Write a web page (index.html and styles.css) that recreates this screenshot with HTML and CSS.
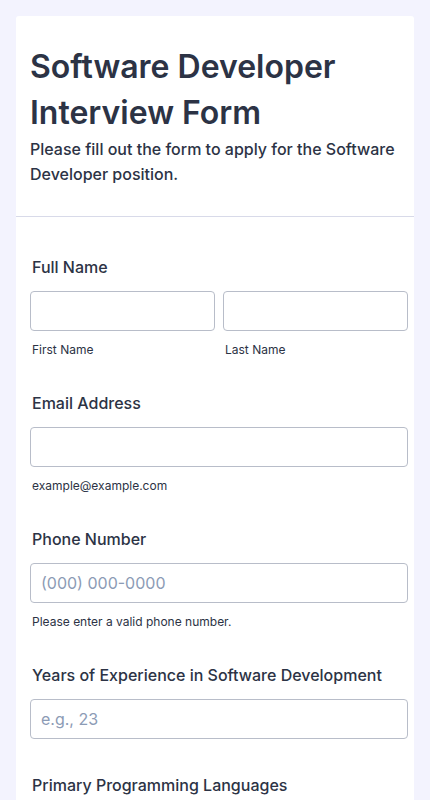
FILE: index.html
```html
<!DOCTYPE html>
<html lang="en">
<head>
    <meta charset="UTF-8">
    <meta name="viewport" content="width=device-width, initial-scale=1.0">
    <title>Software Developer Interview Form</title>
    <link rel="stylesheet" href="styles.css">
</head>
<body>
    <form class="form-card">
        <div class="form-header">
            <h1>Software Developer Interview Form</h1>
            <p>Please fill out the form to apply for the Software Developer position.</p>
        </div>

        <div class="form-list">
            <div class="field">
                <label class="field-label">Full Name</label>
                <div class="name-row">
                    <div class="name-col">
                        <input type="text" id="firstName">
                        <span class="sublabel">First Name</span>
                    </div>
                    <div class="name-col">
                        <input type="text" id="lastName">
                        <span class="sublabel">Last Name</span>
                    </div>
                </div>
            </div>

            <div class="field">
                <label class="field-label" for="email">Email Address</label>
                <input type="email" id="email">
                <span class="sublabel">example@example.com</span>
            </div>

            <div class="field">
                <label class="field-label" for="phone">Phone Number</label>
                <input type="tel" id="phone" placeholder="(000) 000-0000">
                <span class="sublabel">Please enter a valid phone number.</span>
            </div>

            <div class="field">
                <label class="field-label" for="years">Years of Experience in Software Development</label>
                <input type="text" id="years" placeholder="e.g., 23">
            </div>

            <div class="field">
                <label class="field-label" for="languages">Primary Programming Languages</label>
                <input type="text" id="languages">
            </div>
        </div>
    </form>
</body>
</html>
```

FILE: styles.css
```css
body {
    margin: 0;
    padding: 16px;
    background-color: #f3f3fe;
    font-family: Inter, "Noto Sans", sans-serif;
    color: #2c3345;
}
.form-card {
    background-color: #ffffff;
    border-radius: 3px;
    width: 398px;
}
.form-header {
    padding: 28px 14px 29px;
    border-bottom: 1px solid #d8dae9;
}
.form-header h1 {
    margin: 0;
    font-size: 32px;
    font-weight: 600;
    line-height: 46px;
}
.form-header p {
    margin: 1px 0 0;
    font-size: 16px;
    font-weight: 500;
    line-height: 25px;
}
.form-list {
    padding: 22px 6px 0 14px;
}
.field {
    display: flex;
    flex-direction: column;
    padding: 18px 0;
}
.field-label {
    font-size: 16px;
    font-weight: 500;
    line-height: 20px;
    margin: 0 0 14px 2px;
}
.name-row {
    display: flex;
    gap: 8px;
}
.name-col {
    flex: 1;
    display: flex;
    flex-direction: column;
}
input {
    box-sizing: border-box;
    height: 40px;
    width: 100%;
    border: 1px solid #b8bdc9;
    border-radius: 4px;
    padding: 0 10px;
    font-family: inherit;
    font-size: 16px;
    color: #2c3345;
    background-color: #ffffff;
}
input::placeholder {
    color: #8c9bb5;
}
.sublabel {
    font-size: 12px;
    line-height: 15px;
    margin: 11px 0 0 2px;
}
```
